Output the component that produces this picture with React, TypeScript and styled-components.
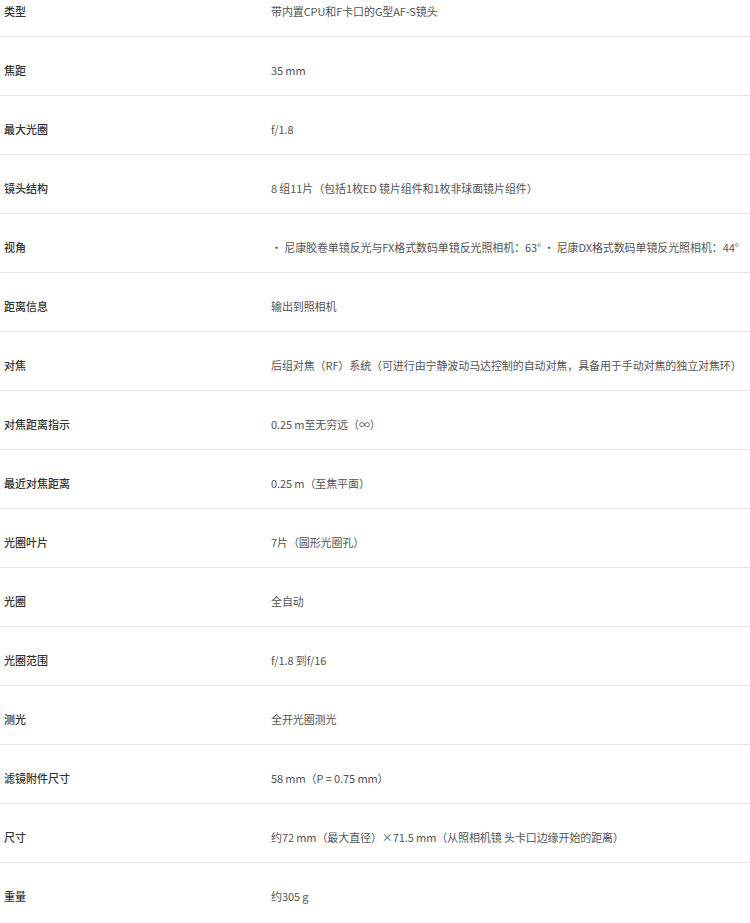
import React from 'react';
import styled, {createGlobalStyle} from 'styled-components';

const GlobalStyle = createGlobalStyle`
  html, body {
    margin: 0;
    padding: 0;
    background: #fff;
  }
  body {
    font-family: "Noto Sans CJK SC", "Liberation Sans", sans-serif;
    overflow: hidden;
  }
`;

const SpecTable = styled.div`
  margin-top: -22px;
  width: 750px;
`;

const SpecRow = styled.div`
  display: grid;
  grid-template-columns: 267px 1fr;
  padding: 26px 0 18px 4px;
  line-height: 14px;
  border-bottom: 1px solid #e6e6e6;

  &:last-child {
    border-bottom: none;
  }
`;

const Label = styled.div`
  font-size: 11px;
  font-weight: 500;
  color: #333;
  white-space: nowrap;
`;

const Value = styled.div`
  font-size: 11px;
  color: #555;
  white-space: nowrap;
  letter-spacing: -0.1px;
`;

const specs: [string, string][] = [
  ['类型', '带内置CPU和F卡口的G型AF-S镜头'],
  ['焦距', '35 mm'],
  ['最大光圈', 'f/1.8'],
  ['镜头结构', '8 组11片（包括1枚ED 镜片组件和1枚非球面镜片组件）'],
  ['视角', '• 尼康胶卷单镜反光与FX格式数码单镜反光照相机：63° • 尼康DX格式数码单镜反光照相机：44°'],
  ['距离信息', '输出到照相机'],
  ['对焦', '后组对焦（RF）系统（可进行由宁静波动马达控制的自动对焦，具备用于手动对焦的独立对焦环）'],
  ['对焦距离指示', '0.25 m至无穷远（∞）'],
  ['最近对焦距离', '0.25 m（至焦平面）'],
  ['光圈叶片', '7片（圆形光圈孔）'],
  ['光圈', '全自动'],
  ['光圈范围', 'f/1.8 到f/16'],
  ['测光', '全开光圈测光'],
  ['滤镜附件尺寸', '58 mm（P = 0.75 mm）'],
  ['尺寸', '约72 mm（最大直径）×71.5 mm（从照相机镜 头卡口边缘开始的距离）'],
  ['重量', '约305 g'],
];

function App() {
  return <>
    <GlobalStyle/>
    <SpecTable>
      {specs.map(([label, value]) => <SpecRow key={label}>
        <Label>{label}</Label>
        <Value>{value}</Value>
      </SpecRow>)}
    </SpecTable>
  </>;
}

export default App;
